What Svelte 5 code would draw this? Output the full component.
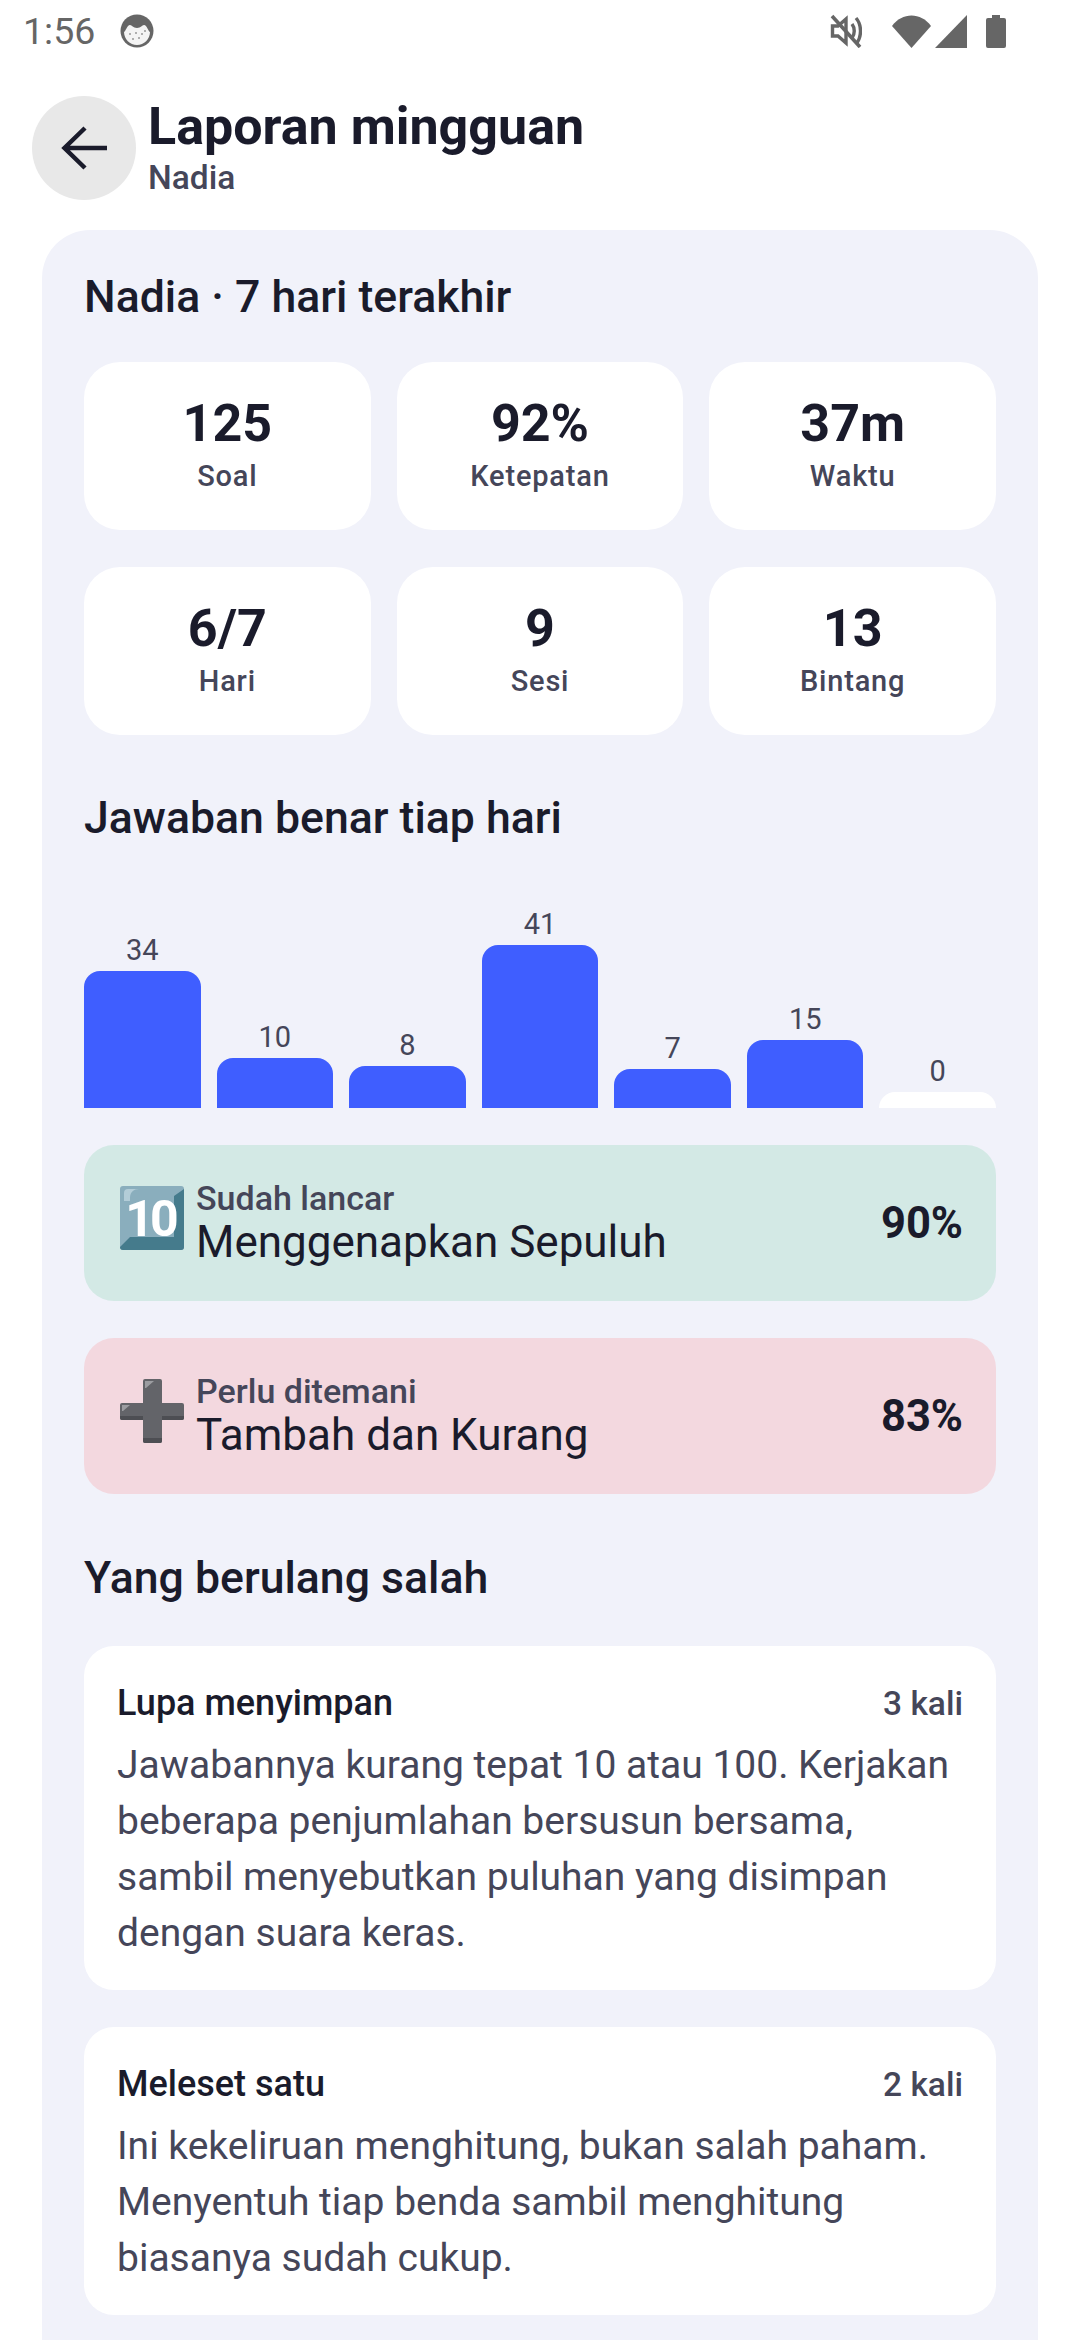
<script>
  const stats = [
    { value: '125', label: 'Soal' },
    { value: '92%', label: 'Ketepatan' },
    { value: '37m', label: 'Waktu' },
    { value: '6/7', label: 'Hari' },
    { value: '9', label: 'Sesi' },
    { value: '13', label: 'Bintang' }
  ];

  const bars = [
    { value: 34, height: 137 },
    { value: 10, height: 50 },
    { value: 8, height: 42 },
    { value: 41, height: 163 },
    { value: 7, height: 39 },
    { value: 15, height: 68 },
    { value: 0, height: 16 }
  ];

  const mistakes = [
    {
      title: 'Lupa menyimpan',
      count: '3 kali',
      text: 'Jawabannya kurang tepat 10 atau 100. Kerjakan beberapa penjumlahan bersusun bersama, sambil menyebutkan puluhan yang disimpan dengan suara keras.'
    },
    {
      title: 'Meleset satu',
      count: '2 kali',
      text: 'Ini kekeliruan menghitung, bukan salah paham. Menyentuh tiap benda sambil menghitung biasanya sudah cukup.'
    }
  ];
</script>

<div class="screen">
  <div class="status">
    <span class="time">1:56</span>
    <svg class="cat" viewBox="0 0 34 34">
      <circle cx="17" cy="17" r="16.5" fill="#666" />
      <path d="M4 18c2-1 3-7 6-7 2 0 3 3 7 3s5-3 7-3c3 0 4 6 6 7 0 7-6 13-13 13S4 25 4 18z" fill="#f4f4f4" />
      <g fill="#999">
        <circle cx="10" cy="20" r="1" /><circle cx="16" cy="19" r="1" /><circle cx="22" cy="20" r="1" />
        <circle cx="13" cy="25" r="1" /><circle cx="19" cy="24" r="1" /><circle cx="25" cy="17" r="1" />
      </g>
    </svg>
    <span class="spacer"></span>
    <svg class="mute" viewBox="0 0 32 34" fill="none" stroke="#666" stroke-width="3.4">
      <path d="M8 12H2.500v10H8l8 7V5z" />
      <path d="M22 10c3 4 3 10 0 14M26 4c6 7 6 19 0 26" />
      <path d="M2 2l28 31" stroke-width="3.600" />
    </svg>
    <svg class="wifi" viewBox="0 0 39 33"><path d="M0 11C10-3 29-3 39 11L19.500 33z" fill="#666" /></svg>
    <svg class="signal" viewBox="0 0 32 33"><path d="M32 0v33H0z" fill="#666" /></svg>
    <svg class="battery" viewBox="0 0 20 33"><path d="M6 0h8v3h4a2 2 0 0 1 2 2v26a2 2 0 0 1-2 2H2a2 2 0 0 1-2-2V5a2 2 0 0 1 2-2h4z" fill="#666" /></svg>
  </div>

  <header class="top">
    <div class="back">
      <svg viewBox="0 0 48 48" width="48" height="48" fill="none" stroke="#1a1b2b" stroke-width="4.500">
        <path d="M47 24H6M25 4L4.500 24 25 44" />
      </svg>
    </div>
    <div class="head">
      <h1>Laporan mingguan</h1>
      <div class="sub">Nadia</div>
    </div>
  </header>

  <main class="panel">
    <h2 class="first">Nadia · 7 hari terakhir</h2>

    <div class="stats">
      {#each stats as s}
        <div class="stat">
          <div class="num">{s.value}</div>
          <div class="lab">{s.label}</div>
        </div>
      {/each}
    </div>

    <h2 class="chart-title">Jawaban benar tiap hari</h2>

    <div class="chart">
      {#each bars as b}
        <div class="col">
          <span>{b.value}</span>
          <div class="bar" class:empty={b.value === 0} style="height: {b.height}px"></div>
        </div>
      {/each}
    </div>

    <div class="hl green">
      <svg class="emoji" viewBox="0 0 64 64">
        <rect width="64" height="64" rx="3" fill="#8aaebd" />
        <path d="M64 3v58a3 3 0 0 1-3 3H3a3 3 0 0 1-3-3l10-10h44V10z" fill="#457b8c" />
        <path d="M8 3h11c-5 0-9 3-9 9v3H4V7a4 4 0 0 1 4-4z" fill="#b3cdd8" />
        <text x="30" y="50" text-anchor="middle" class="key">10</text>
      </svg>
      <div class="hl-text">
        <div class="hl-lab">Sudah lancar</div>
        <div class="hl-name">Menggenapkan Sepuluh</div>
      </div>
      <div class="hl-pct">90%</div>
    </div>

    <div class="hl pink">
      <svg class="emoji" viewBox="0 0 64 64">
        <path d="M25 0h15a2 2 0 0 1 2 2v22h20a2 2 0 0 1 2 2v13a2 2 0 0 1-2 2H42v21a2 2 0 0 1-2 2H25a2 2 0 0 1-2-2V41H2a2 2 0 0 1-2-2V26a2 2 0 0 1 2-2h21V2a2 2 0 0 1 2-2z" fill="#636469" />
        <path d="M23 59h19v3a2 2 0 0 1-2 2H25a2 2 0 0 1-2-2zM0 37h23v4H2a2 2 0 0 1-2-2zM42 37h22v2a2 2 0 0 1-2 2H42z" fill="#4d4e53" />
        <path d="M25 2h9l-8 7h-1zM2 26h8l-7 6H2z" fill="#9c9da1" />
      </svg>
      <div class="hl-text">
        <div class="hl-lab">Perlu ditemani</div>
        <div class="hl-name">Tambah dan Kurang</div>
      </div>
      <div class="hl-pct">83%</div>
    </div>

    <h2 class="wrong-title">Yang berulang salah</h2>

    {#each mistakes as m}
      <div class="mistake">
        <div class="m-head">
          <span class="m-title">{m.title}</span>
          <span class="m-count">{m.count}</span>
        </div>
        <p>{m.text}</p>
      </div>
    {/each}
  </main>
</div>

<style>
  :global(body) {
    margin: 0;
    background: #fff;
  }
  .screen {
    width: 1080px;
    height: 2340px;
    overflow: hidden;
    background: #fff;
    font-family: Roboto, "Noto Sans", sans-serif;
    color: #1a1b2b;
  }
  .status {
    display: flex;
    align-items: center;
    height: 62px;
    padding: 0 74px 0 23px;
  }
  .time {
    font-size: 37.5px;
    color: #666;
    line-height: 62px;
  }
  .cat {
    width: 34px;
    height: 34px;
    margin-left: 25px;
  }
  .spacer {
    flex: 1;
  }
  .mute {
    width: 32px;
    height: 34px;
    margin-right: 30px;
  }
  .wifi {
    width: 39px;
    height: 33px;
    margin-right: 4px;
  }
  .signal {
    width: 32px;
    height: 33px;
    margin-right: 19px;
  }
  .battery {
    width: 20px;
    height: 33px;
  }
  .top {
    display: flex;
    align-items: center;
    gap: 12px;
    padding: 33px 32px 0;
    height: 105px;
  }
  .back {
    width: 104px;
    height: 104px;
    border-radius: 50%;
    background: #e8e8e8;
    display: flex;
    align-items: center;
    justify-content: center;
  }
  h1 {
    margin: 0;
    font-size: 52px;
    line-height: 60px;
    font-weight: 700;
  }
  .sub {
    font-size: 33.5px;
    line-height: 41px;
    font-weight: 500;
    color: #454659;
  }
  .panel {
    margin: 30px 42px 0;
    padding: 42px 42px 0;
    height: 2110px;
    box-sizing: border-box;
    border-radius: 48px 48px 0 0;
    background: #f1f2fa;
  }
  h2 {
    margin: 0;
    font-size: 44.6px;
    line-height: 52px;
    font-weight: 500;
  }
  .first {
    margin-top: -1px;
  }
  .stats {
    display: grid;
    grid-template-columns: repeat(3, 1fr);
    gap: 37px 26px;
    margin-top: 39px;
  }
  .stat {
    height: 168px;
    border-radius: 36px;
    background: #fff;
    text-align: center;
    padding-top: 32px;
    box-sizing: border-box;
  }
  .num {
    font-size: 52px;
    line-height: 60px;
    font-weight: 700;
  }
  .lab {
    margin-top: 5px;
    font-size: 29px;
    line-height: 34px;
    font-weight: 500;
    color: #454659;
    letter-spacing: 0.8px;
  }
  .chart-title {
    margin-top: 57px;
  }
  .chart {
    display: flex;
    align-items: flex-end;
    gap: 16px;
    height: 226px;
    margin-top: 38px;
  }
  .col {
    flex: 1;
    display: flex;
    flex-direction: column;
    align-items: stretch;
    text-align: center;
  }
  .col span {
    font-size: 29px;
    line-height: 34px;
    font-weight: 400;
    color: #454659;
    margin-bottom: 4px;
  }
  .bar {
    background: #3f5eff;
    border-radius: 16px 16px 0 0;
  }
  .bar.empty {
    background: #fff;
  }
  .hl {
    display: flex;
    align-items: center;
    height: 156px;
    box-sizing: border-box;
    padding: 0 33px 0 36px;
    border-radius: 30px;
    margin-top: 37px;
  }
  .green {
    background: #d3e9e5;
  }
  .pink {
    background: #f3d8df;
  }
  .emoji {
    width: 64px;
    height: 64px;
    margin-right: 12px;
    margin-top: -10px;
  }
  .key {
    font-family: Roboto, sans-serif;
    font-size: 50px;
    font-weight: 700;
    fill: #fff;
    letter-spacing: -4px;
  }
  .hl-text {
    flex: 1;
  }
  .hl-lab {
    font-size: 34px;
    line-height: 38px;
    font-weight: 500;
    color: #454659;
  }
  .hl-name {
    font-size: 44px;
    line-height: 50px;
  }
  .hl-pct {
    font-size: 43.5px;
    font-weight: 700;
  }
  .wrong-title {
    margin-top: 58px;
  }
  .mistake {
    background: #fff;
    border-radius: 30px;
    padding: 33px 33px 29px;
    margin-top: 37px;
  }
  .wrong-title + .mistake {
    margin-top: 42px;
  }
  .m-head {
    display: flex;
    justify-content: space-between;
    align-items: baseline;
    line-height: 48px;
  }
  .m-title {
    font-size: 36px;
    font-weight: 500;
  }
  .m-count {
    font-size: 33.5px;
    font-weight: 500;
    color: #454659;
  }
  p {
    margin: 9px 0 0;
    font-size: 39px;
    line-height: 56px;
    color: #454659;
  }
</style>
